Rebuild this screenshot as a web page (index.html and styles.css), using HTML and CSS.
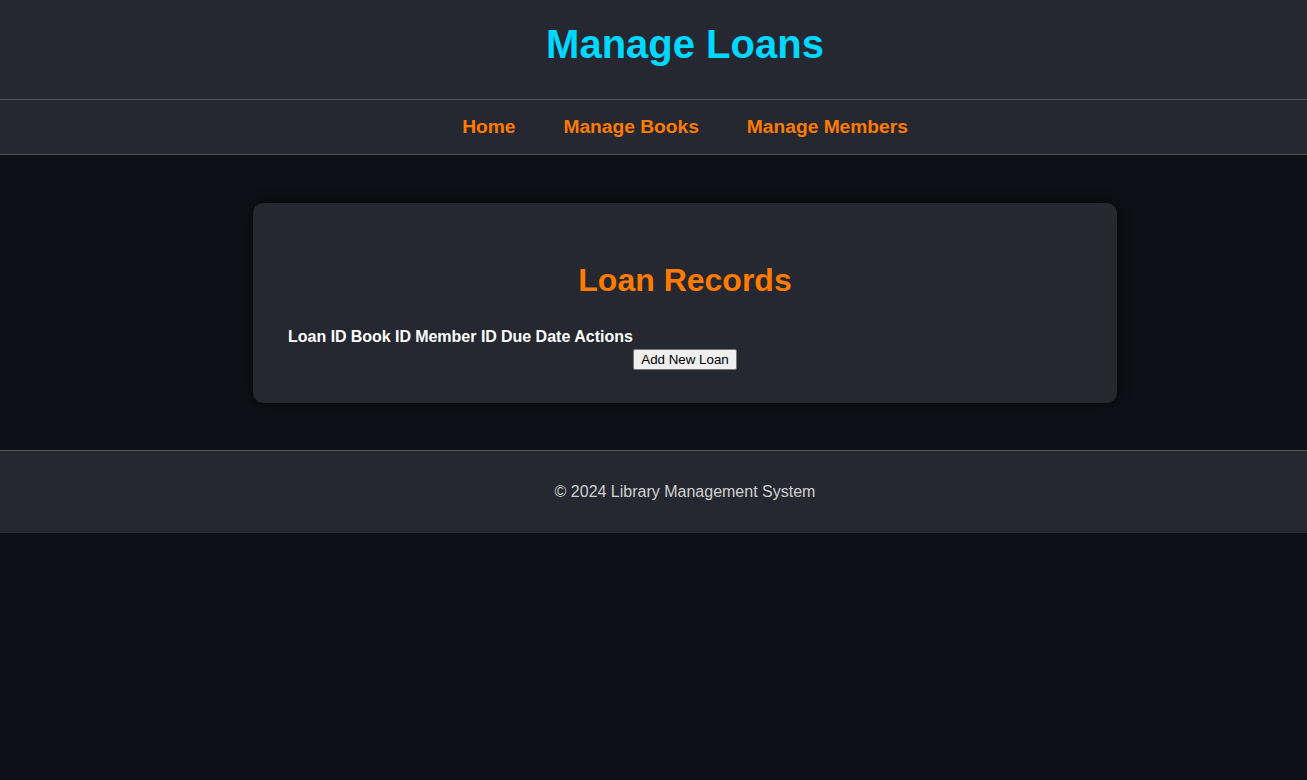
FILE: index.html
```html
<!DOCTYPE html>
<html lang="en">
<head>
<meta charset="utf-8">
<title>Manage Loans</title>
<link rel="stylesheet" href="styles.css">
</head>
<body>
<header class="site-header">
  <h1 class="site-title">Manage Loans</h1>
</header>
<nav class="site-nav">
  <a class="nav-link" href="#">Home</a>
  <a class="nav-link" href="#">Manage Books</a>
  <a class="nav-link" href="#">Manage Members</a>
</nav>
<main class="main">
  <section class="card">
    <h2 class="card-title">Loan Records</h2>
    <table class="loan-table">
      <thead>
        <tr>
          <th>Loan ID</th>
          <th>Book ID</th>
          <th>Member ID</th>
          <th>Due Date</th>
          <th>Actions</th>
        </tr>
      </thead>
      <tbody></tbody>
    </table>
    <div class="actions">
      <button class="btn" type="button">Add New Loan</button>
    </div>
  </section>
</main>
<footer class="site-footer">
  <p class="footer-text">© 2024 Library Management System</p>
</footer>
</body>
</html>
```

FILE: styles.css
```css
html {
  background: #0d1018;
}
body {
  margin: 0;
  font-family: "Liberation Sans", Arial, sans-serif;
  font-size: 16px;
  color: #ffffff;
  background: #0d1018;
  overflow-x: hidden;
}
.site-header,
.site-nav,
.main,
.site-footer {
  width: 100%;
  padding-left: 31.5px;
  padding-right: 32px;
  box-sizing: content-box;
}
.site-header {
  background: #252830;
  text-align: center;
  display: flow-root;
}
.site-title {
  margin: 21.8px 0 31.8px;
  font-size: 40px;
  font-weight: bold;
  color: #00d8ff;
  line-height: normal;
}
.site-nav {
  background: #252830;
  border-top: 1px solid #555;
  border-bottom: 1px solid #555;
  padding-top: 16px;
  padding-bottom: 16px;
  display: flex;
  justify-content: center;
  gap: 48px;
}
.nav-link {
  color: #ff7b00;
  font-weight: bold;
  font-size: 19.2px;
  line-height: 22px;
  text-decoration: none;
}
.main {
  padding-top: 48px;
  padding-bottom: 47px;
}
.card {
  width: 800px;
  margin: 0 auto;
  padding: 32.5px 32px;
  background: #252830;
  border-radius: 10px;
  box-shadow: 0 0 12px rgba(0, 0, 0, 0.55);
}
.card-title {
  margin: 26.56px 0;
  text-align: center;
  font-size: 32px;
  color: #ff7b00;
}
.loan-table {
  color: #ffffff;
}
.loan-table th {
  padding: 1px;
  text-align: center;
}
.actions {
  text-align: center;
}
.btn {
  font-family: "Liberation Sans", Arial, sans-serif;
  font-size: 13.333px;
  color: #000;
  background: #efefef;
  border: 1px solid #767676;
  border-radius: 2px;
  padding: 1px 7px;
  height: 21px;
}
.site-footer {
  background: #252830;
  border-top: 1px solid #555;
  padding-top: 16px;
  padding-bottom: 16px;
  text-align: center;
}
.footer-text {
  margin: 16px 0;
  color: #d0d0d0;
}
```
